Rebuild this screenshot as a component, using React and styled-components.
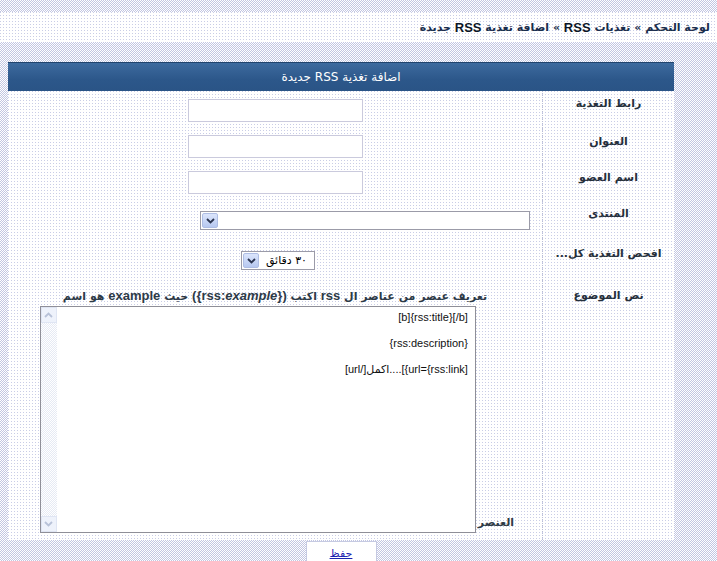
import React from 'react';
import styled, { createGlobalStyle } from 'styled-components';

const LAT = `"Liberation Sans", "DejaVu Sans", sans-serif`;
const AR = `"DejaVu Sans", "Liberation Sans", sans-serif`;

const outerPattern = `repeating-conic-gradient(#c2c6e2 0 25%, #ffffff 0 50%) 0 0 / 2px 2px`;
const innerPattern = `conic-gradient(from 0deg at 1px 1px, #ffffff 0 75%, #c9cde6 0) 0 0 / 3px 3px`;

const Global = createGlobalStyle`
  html, body { margin: 0; padding: 0; background: ${outerPattern}; }
  body { font-family: ${AR}; width: 717px; height: 561px; overflow: hidden; }
`;

const Page = styled.div`
  direction: rtl;
  padding-top: 12px;
`;

const Breadcrumb = styled.div`
  height: 30px;
  background: ${innerPattern};
  background-color: #fff;
  display: flex;
  align-items: center;
  padding-right: 7px;
  font: bold 11px ${AR};
  color: #1a2e4d;
`;

const Strong = styled.span`
  color: #0c1626;
  font-family: ${LAT};
  font-size: 13px;
`;

const Panel = styled.div`
  width: 666px;
  margin: 20px auto 0 8px;
`;

const Header = styled.div`
  height: 28px;
  border-top: 1px solid #21446e;
  background: linear-gradient(#3d6a9e, #2c578a 60%, #2a5486);
  color: #fff;
  font: 12px ${AR};
  display: flex;
  align-items: center;
  justify-content: center;
`;

const Body = styled.div`
  background: ${innerPattern};
  background-color: #fff;
`;

const Row = styled.div`
  display: grid;
  grid-template-columns: 132px 1fr;
  height: ${p => p.$h}px;
`;

const Label = styled.div`
  border-left: 1px dotted #b9bdd6;
  text-align: center;
  padding-top: ${p => p.$pt}px;
  font: bold 11px ${AR};
  line-height: 14px;
  color: #26303c;
`;

const Field = styled.div`
  display: flex;
  flex-direction: column;
  align-items: ${p => p.$align || 'center'};
  padding-top: ${p => p.$pt}px;
  padding-right: ${p => p.$pr || 0}px;
  padding-left: ${p => p.$pl || 0}px;
`;

const TextInput = styled.input`
  box-sizing: border-box;
  width: 175px;
  height: 23px;
  margin: 0;
  border: 1px solid #cacadd;
  background: #fff;
  outline: none;
`;

const FakeSelect = styled.div`
  box-sizing: border-box;
  width: ${p => p.$w}px;
  height: 19px;
  border: 1px solid #9b9ba8;
  background: #fff;
  display: flex;
  align-items: center;
`;

const SelectText = styled.span`
  flex: 1;
  text-align: right;
  padding-right: 7px;
  font: 11px ${AR};
  color: #000;
  line-height: 15px;
`;

const ArrowBtn = styled.span`
  box-sizing: border-box;
  width: 16px;
  height: 15px;
  margin: 1px;
  border: 1px solid #aebde4;
  border-radius: 2px;
  background: linear-gradient(#dbe5fc, #b7c8f0);
  display: flex;
  align-items: center;
  justify-content: center;
`;

const Desc = styled.div`
  text-align: center;
  font: bold 11px ${AR};
  line-height: 14px;
  color: #2d3a47;
`;

const Latin = styled.span`
  font-family: ${LAT};
  font-size: 13px;
  font-weight: bold;
  font-style: ${p => (p.$italic ? 'italic' : 'normal')};
`;

const AreaLine = styled.div`
  margin-top: 2px;
  padding-left: 4px;
  display: flex;
  justify-content: center;
  align-items: flex-end;
  gap: 2px;
`;

const EndWord = styled.span`
  font: bold 11px ${AR};
  color: #2d3a47;
  line-height: 14px;
  margin-bottom: 3px;
`;

const TextBox = styled.div`
  box-sizing: border-box;
  width: 436px;
  height: 227px;
  border: 1px solid #8f8f98;
  background: #fff;
  display: flex;
`;

const TextContent = styled.div`
  flex: 1;
  padding: 4px 7px 0 0;
  font: 11px ${LAT};
  line-height: 13px;
  color: #111;
`;

const TextLine = styled.div`
  direction: ltr;
  text-align: right;
  height: 13px;
`;

const ScrollBar = styled.div`
  width: 16px;
  display: flex;
  flex-direction: column;
  justify-content: space-between;
  background: repeating-conic-gradient(#e6eaf4 0 25%, #ffffff 0 50%) 0 0 / 2px 2px;
`;

const ScrollBtn = styled.span`
  box-sizing: border-box;
  width: 16px;
  height: 16px;
  border: 1px solid #dfe5f3;
  background: #eef2fb;
  display: flex;
  align-items: center;
  justify-content: center;
`;

const Footer = styled.div`
  width: 666px;
  margin: 1px auto 0 8px;
  display: flex;
  justify-content: center;
`;

const SaveButton = styled.div`
  box-sizing: border-box;
  width: 71px;
  height: 26px;
  border: 1px solid #c6cae2;
  background: #fff;
  text-align: center;
  padding-top: 5px;
  font: 11px ${AR};
  line-height: 14px;
  color: #1a22b0;
  text-decoration: underline;
`;

const Chevron = ({ up, color = '#2b3550' }) => (
  <svg width="9" height="6" viewBox="0 0 9 6">
    <path
      d={up ? 'M1 5 L4.5 1.5 L8 5' : 'M1 1 L4.5 4.5 L8 1'}
      fill="none"
      stroke={color}
      strokeWidth="1.8"
    />
  </svg>
);

const Select = ({ w, text }) => (
  <FakeSelect $w={w}>
    <SelectText>{text}</SelectText>
    <ArrowBtn><Chevron /></ArrowBtn>
  </FakeSelect>
);

const templateLines = [
  '[b]{rss:title}[/b]',
  '',
  '{rss:description}',
  '',
  '[url/]اكمل....[{url={rss:link]',
];

export default function App() {
  return (
    <>
      <Global />
      <Page>
        <Breadcrumb>
          لوحة التحكم » تغذيات&nbsp;<Strong>RSS</Strong>&nbsp;» اضافة تغذية&nbsp;<Strong>RSS</Strong>&nbsp;جديدة
        </Breadcrumb>
        <Panel>
          <Header>اضافة تغذية RSS جديدة</Header>
          <Body>
            <Row $h={37}>
              <Label $pt={6}>رابط التغذية</Label>
              <Field $pt={8}><TextInput /></Field>
            </Row>
            <Row $h={36}>
              <Label $pt={7}>العنوان</Label>
              <Field $pt={7}><TextInput /></Field>
            </Row>
            <Row $h={36}>
              <Label $pt={7}>اسم العضو</Label>
              <Field $pt={7}><TextInput /></Field>
            </Row>
            <Row $h={38}>
              <Label $pt={7}>المنتدى</Label>
              <Field $pt={11} $align="flex-start" $pr={12}><Select w={330} text="" /></Field>
            </Row>
            <Row $h={42}>
              <Label $pt={9}>افحص التغذية كل...</Label>
              <Field $pt={13} $pl={6}><Select w={74} text="٣٠ دقائق" /></Field>
            </Row>
            <Row $h={260}>
              <Label $pt={9}>نص الموضوع</Label>
              <Field $pt={9}>
                <Desc>
                  تعريف عنصر من عناصر ال <Latin>rss</Latin> اكتب <Latin>({'{'}rss:<Latin $italic>example</Latin>{'}'})</Latin> حيث <Latin>example</Latin> هو اسم
                </Desc>
                <AreaLine>
                  <EndWord>العنصر</EndWord>
                  <TextBox>
                    <TextContent>
                      {templateLines.map((l, i) => (
                        <TextLine key={i}>{l}</TextLine>
                      ))}
                    </TextContent>
                    <ScrollBar>
                      <ScrollBtn><Chevron up color="#b8c2d8" /></ScrollBtn>
                      <ScrollBtn><Chevron color="#b8c2d8" /></ScrollBtn>
                    </ScrollBar>
                  </TextBox>
                </AreaLine>
              </Field>
            </Row>
          </Body>
        </Panel>
        <Footer>
          <SaveButton>حفظ</SaveButton>
        </Footer>
      </Page>
    </>
  );
}
